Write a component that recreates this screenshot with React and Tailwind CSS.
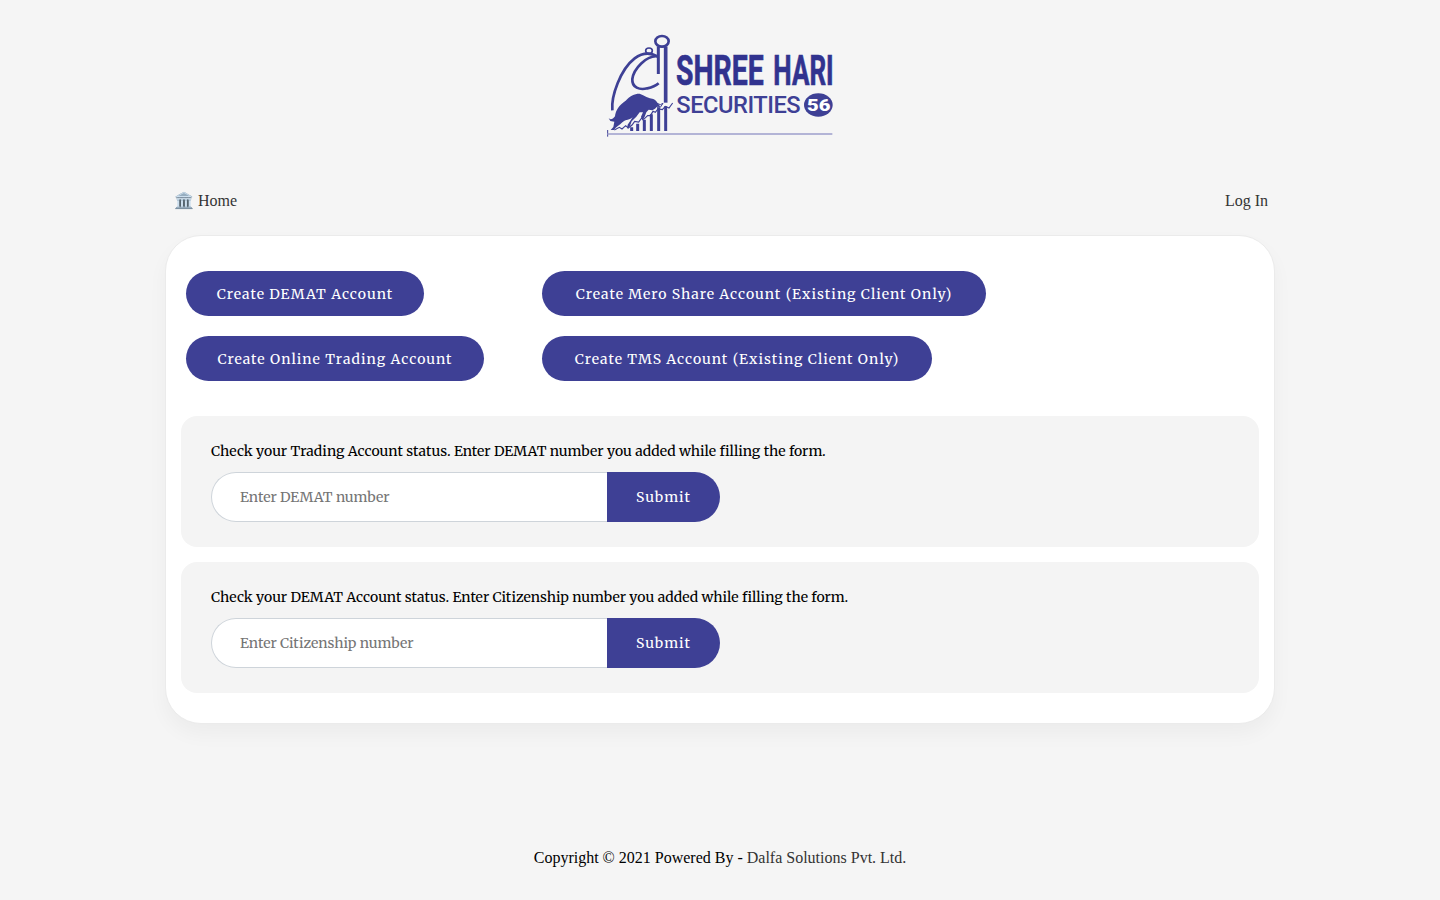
import React from "react";

const SERIF = "font-['Merriweather','Noto_Serif','DejaVu_Serif_Condensed','DejaVu_Serif',serif]";

function Logo() {
  return (
    <svg className="h-[115px] w-60" viewBox="0 0 720 345" fill="none" stroke="#3e4095">
      <ellipse cx="186" cy="40" rx="20" ry="16" strokeWidth="8" />
      <ellipse cx="147" cy="68" rx="10" ry="8" strokeWidth="5" />
      <path d="M175 56V138" strokeWidth="9" />
      <path d="M197 56V224" strokeWidth="11" />
      <path d="M37 247C33 205 61 124 104 91C128 73 149 72 173 85" strokeWidth="8" />
      <path d="M172 85C139 82 101 122 97 153C95 179 119 187 142 181C157 178 168 173 176 166" strokeWidth="8" />
      <g strokeWidth="9">
        <path d="M197 235V309M176 240V309M154 259V309M133 275V309M113 287V309M95 298V309" />
      </g>
      <path
        d="M24 267C28 276 37 276 45 265C47 247 57 231 77 218C89 203 107 196 119 197C133 203 146 211 160 213C168 216 172 225 177 230L181 237L171 236L165 242L157 247L146 245L139 253L134 266L127 278L123 266L129 253L119 253L109 266L95 280L90 294L81 302L83 290L91 278L98 267C91 277 76 274 68 282C58 292 48 296 42 306H32L40 297L43 281L31 279Z"
        fill="#3e4095"
        stroke="none"
      />
      <path d="M43 306L58 298L66 303L77 293L85 300L96 291L104 280L116 282L125 270L131 274L143 263L151 263L159 250L166 253L174 243L187 245L196 235L207 240L218 225" strokeWidth="3.5" />
      <path d="M169 225L181 230L189 226L181 238L171 238" strokeWidth="3" />
      <path d="M23 306V326" strokeWidth="3" />
      <path d="M22 318H697" stroke="#9d9ecb" strokeWidth="5" />
      <g fill="#31338f" stroke="#31338f" strokeWidth="2" fontFamily="Roboto, sans-serif" fontWeight="700" fontSize="129">
        <text x="228" y="170" textLength="263" lengthAdjust="spacingAndGlyphs">SHREE</text>
        <text x="520" y="170" textLength="181" lengthAdjust="spacingAndGlyphs">HARI</text>
      </g>
      <text x="229" y="256" textLength="373" lengthAdjust="spacing" fill="#3e4095" stroke="none" fontFamily="Roboto, sans-serif" fontWeight="500" fontSize="71">SECURITIES</text>
      <ellipse cx="655" cy="231" rx="43" ry="35" fill="#3e4095" stroke="none" />
      <text x="621" y="248" textLength="70" lengthAdjust="spacingAndGlyphs" fill="#fff" stroke="none" fontFamily="Roboto, sans-serif" fontWeight="900" fontSize="48">56</text>
    </svg>
  );
}

function Pill({ className, children }) {
  return (
    <button className={`flex h-[45px] items-center justify-center whitespace-nowrap rounded-full bg-[#3e4095] text-sm text-white ${className}`}>
      {children}
    </button>
  );
}

function StatusCheck({ label, labelClass, placeholder, inputClass }) {
  return (
    <section className="h-[131px] rounded-2xl bg-[#f4f4f4] px-[30px] pt-6">
      <p className={`h-8 whitespace-nowrap text-sm leading-[22px] text-black ${labelClass}`}>{label}</p>
      <form className="flex h-[50px]">
        <input
          className={`w-[396px] rounded-l-[25px] border border-r-0 border-[#ced4da] bg-white px-7 text-sm outline-none placeholder:text-[#757575] ${inputClass}`}
          placeholder={placeholder}
        />
        <button type="button" className="w-[113px] rounded-r-[25px] bg-[#3e4095] text-sm tracking-[1px] text-white">
          Submit
        </button>
      </form>
    </section>
  );
}

export default function App() {
  return (
    <div className="flex h-[900px] flex-col items-center bg-[#f5f5f5] pt-7 font-['Liberation_Serif',serif]">
      <header>
        <Logo />
      </header>
      <nav className="mt-[46px] flex h-6 w-[1108px] items-center justify-between pl-2 pr-1.5 text-base text-[#333]">
        <a>🏛️ Home</a>
        <a>Log In</a>
      </nav>
      <main className={`mt-[22px] h-[489px] w-[1110px] rounded-[36px] border border-[#ebebeb] bg-white px-[15px] pt-[35px] shadow-[0_10px_20px_rgba(0,0,0,0.04)] ${SERIF}`}>
        <div className="grid grid-cols-[356px_1fr] gap-y-5 pl-[5px]">
          <Pill className="w-[238px] tracking-[1px]">Create DEMAT Account</Pill>
          <Pill className="w-[444px] tracking-[1px]">Create Mero Share Account (Existing Client Only)</Pill>
          <Pill className="w-[298px] tracking-[1px]">Create Online Trading Account</Pill>
          <Pill className="w-[390px] tracking-[1px]">Create TMS Account (Existing Client Only)</Pill>
        </div>
        <div className="mt-[35px] flex flex-col gap-[15px]">
          <StatusCheck
            label="Check your Trading Account status. Enter DEMAT number you added while filling the form."
            labelClass=""
            placeholder="Enter DEMAT number"
            inputClass=""
          />
          <StatusCheck
            label="Check your DEMAT Account status. Enter Citizenship number you added while filling the form."
            labelClass=""
            placeholder="Enter Citizenship number"
            inputClass=""
          />
        </div>
      </main>
      <footer className="mt-[122px] text-base text-black">
        Copyright © 2021 Powered By - <a className="text-[#333]">Dalfa Solutions Pvt. Ltd.</a>
      </footer>
    </div>
  );
}
